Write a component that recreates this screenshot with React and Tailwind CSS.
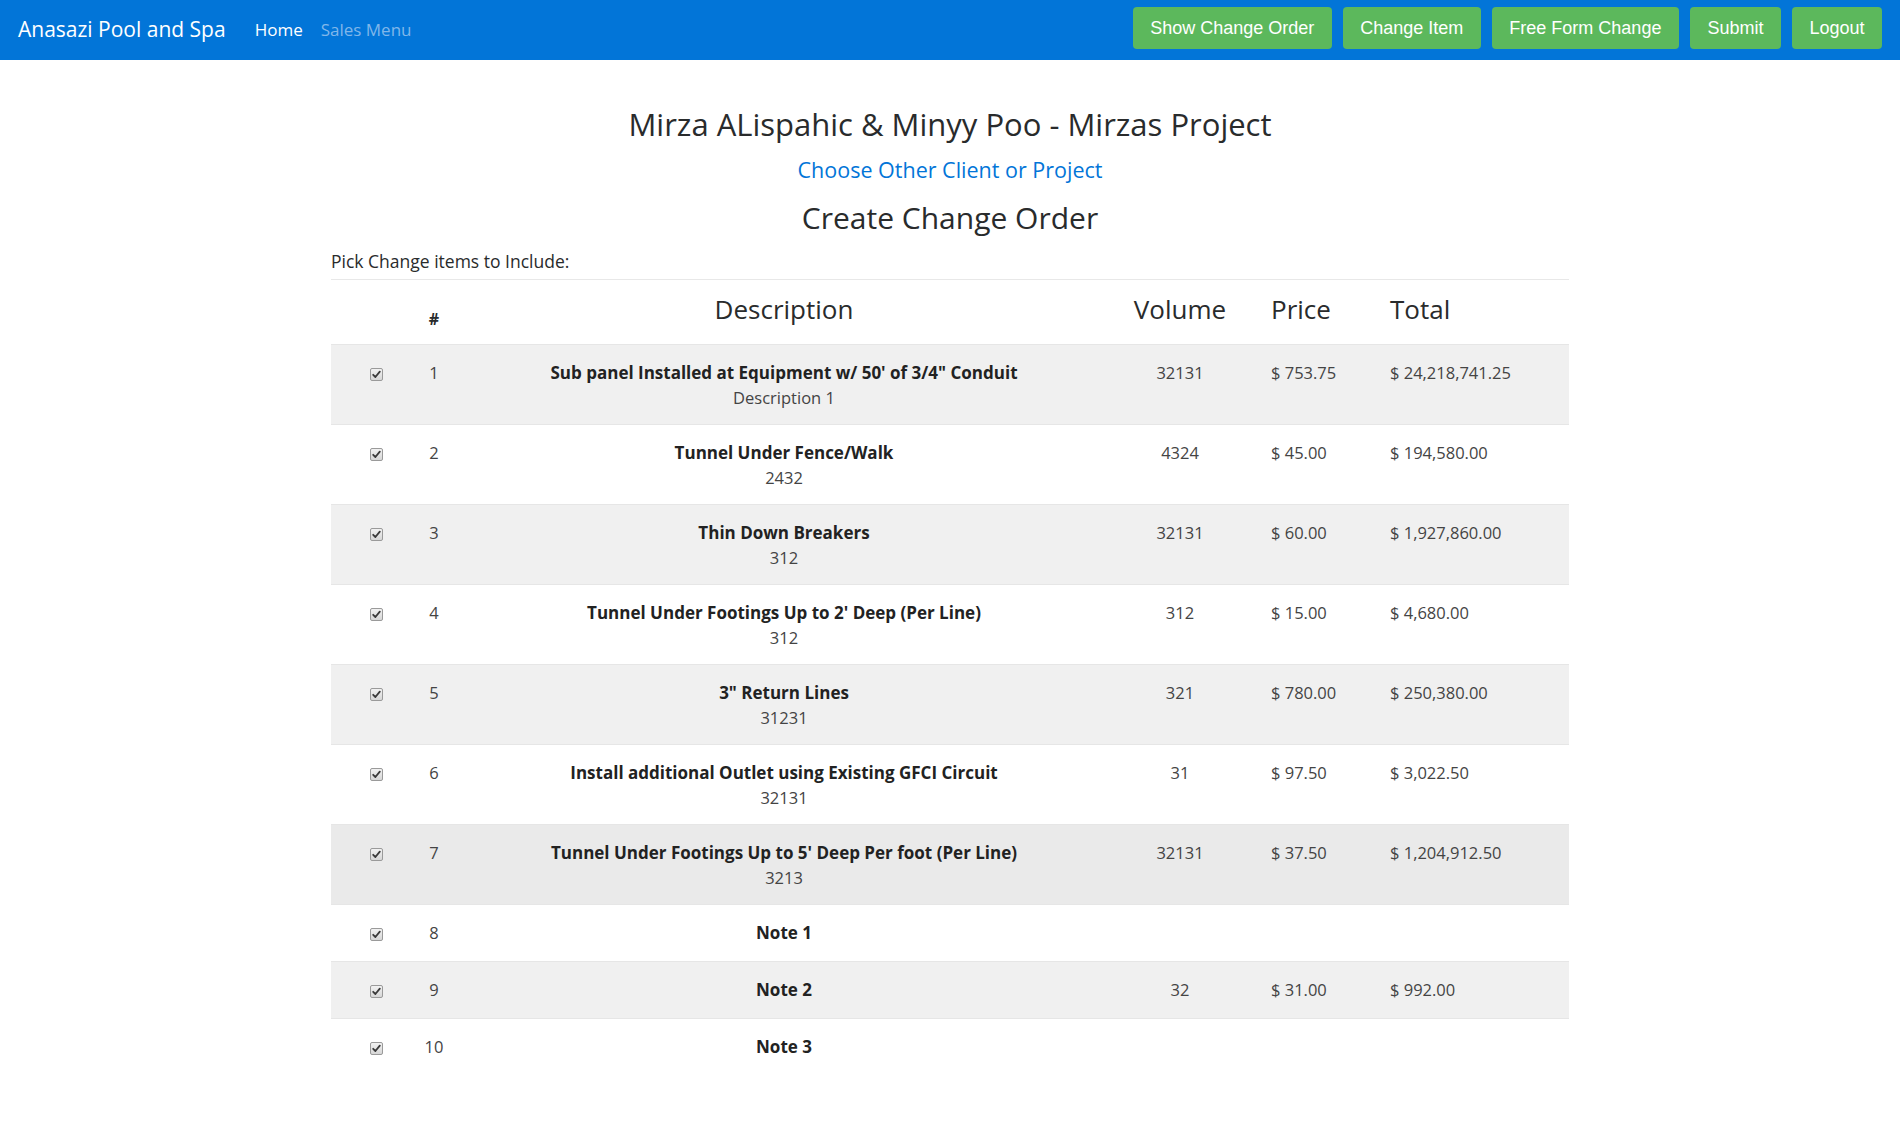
import React from "react";

const rows = [
  { n: 1, t: `Sub panel Installed at Equipment w/ 50' of 3/4" Conduit`, d: "Description 1", v: "32131", p: "$ 753.75", tot: "$ 24,218,741.25" },
  { n: 2, t: "Tunnel Under Fence/Walk", d: "2432", v: "4324", p: "$ 45.00", tot: "$ 194,580.00" },
  { n: 3, t: "Thin Down Breakers", d: "312", v: "32131", p: "$ 60.00", tot: "$ 1,927,860.00" },
  { n: 4, t: "Tunnel Under Footings Up to 2' Deep (Per Line)", d: "312", v: "312", p: "$ 15.00", tot: "$ 4,680.00" },
  { n: 5, t: `3" Return Lines`, d: "31231", v: "321", p: "$ 780.00", tot: "$ 250,380.00" },
  { n: 6, t: "Install additional Outlet using Existing GFCI Circuit", d: "32131", v: "31", p: "$ 97.50", tot: "$ 3,022.50" },
  { n: 7, t: "Tunnel Under Footings Up to 5' Deep Per foot (Per Line)", d: "3213", v: "32131", p: "$ 37.50", tot: "$ 1,204,912.50", hover: true },
  { n: 8, t: "Note 1", d: null, v: "", p: "", tot: "" },
  { n: 9, t: "Note 2", d: null, v: "32", p: "$ 31.00", tot: "$ 992.00" },
  { n: 10, t: "Note 3", d: null, v: "", p: "", tot: "" },
];

function Check() {
  return (
    <span className="inline-flex w-[13px] h-[13px] items-center justify-center rounded-[2px] border border-[#9a9a9a] bg-gradient-to-b from-[#f2f2f2] to-[#d6d6d6] align-middle">
      <svg width="9" height="9" viewBox="0 0 9 9">
        <path d="M1.2 4.8 L3.4 7 L7.8 1.6" fill="none" stroke="#3a3a3a" strokeWidth="1.8" strokeLinecap="round" strokeLinejoin="round" />
      </svg>
    </span>
  );
}

export default function App() {
  const btn = "h-[42px] px-[17.5px] rounded-[4px] bg-[#5cb85c] text-white text-[18px] font-['Liberation_Sans',Arial,sans-serif] flex items-center";
  return (
    <div className="min-h-[1124px] bg-white text-[#333] font-['Open_Sans','Noto_Sans',sans-serif]">
      <nav className="h-[60px] bg-[#0275d8] flex items-center pl-[18px] pr-[18px]">
        <div className="flex items-center mb-[2px]">
          <div className="text-white text-[21px] leading-none mr-[29px]">Anasazi Pool and Spa</div>
          <div className="text-white text-[17px] leading-none mr-[18px]">Home</div>
          <div className="text-[#80b7ea] text-[17px] leading-none">Sales Menu</div>
        </div>
        <div className="ml-auto flex gap-[11px] items-center self-start mt-[7px]">
          <div className={btn}>Show Change Order</div>
          <div className={btn}>Change Item</div>
          <div className={btn}>Free Form Change</div>
          <div className={btn}>Submit</div>
          <div className={btn}>Logout</div>
        </div>
      </nav>

      <div className="w-[1238px] mx-auto">
        <h2 className="mt-[47px] text-center text-[31px] leading-[34px] text-[#292b2c]">Mirza ALispahic &amp; Minyy Poo - Mirzas Project</h2>
        <div className="mt-[15px] text-center text-[21.5px] leading-[28px] text-[#0275d8]">Choose Other Client or Project</div>
        <h2 className="mt-[17px] text-center text-[30px] leading-[34px] text-[#292b2c]">Create Change Order</h2>
        <div className="mt-[15px] text-[17.5px] leading-[23px] text-[#292b2c]">Pick Change items to Include:</div>
        <div className="mt-[6px] border-t border-[#e8e8e8]"></div>

        <table className="w-[1238px] table-fixed border-collapse">
          <thead>
            <tr className="h-[64px]">
              <th className="w-[90px]"></th>
              <th className="w-[26px] align-top pt-[29px] text-[16px] leading-[20px] font-bold text-[#292b2c]">#</th>
              <th className="w-[674px] align-top pt-[13px] text-[26px] leading-[32px] font-normal text-[#292b2c]">Description</th>
              <th className="w-[118px] align-top pt-[13px] text-[26px] leading-[32px] font-normal text-[#292b2c]">Volume</th>
              <th className="w-[119px] align-top pt-[13px] pl-[32px] text-left text-[26px] leading-[32px] font-normal text-[#292b2c]">Price</th>
              <th className="w-[211px] align-top pt-[13px] pl-[32px] text-left text-[26px] leading-[32px] font-normal text-[#292b2c]">Total</th>
            </tr>
          </thead>
          <tbody>
            {rows.map((r) => {
              const bg = r.hover ? "bg-[#eaeaea]" : r.n % 2 === 1 ? "bg-[#f0f0f0]" : "bg-white";
              const cell = "align-top py-[15px] text-[16.5px] leading-[26px]";
              return (
                <tr key={r.n} className={`${bg} border-t border-[#e6e6e6]`}>
                  <td className={`${cell} text-center`}><Check /></td>
                  <td className={`${cell} text-center text-[#444]`}>{r.n}</td>
                  <td className={`${cell} text-center`}>
                    <div className="font-bold text-[17px] text-[#222]">{r.t}</div>
                    {r.d && <div className="text-[#444] leading-[23px]">{r.d}</div>}
                  </td>
                  <td className={`${cell} text-center text-[#444]`}>{r.v}</td>
                  <td className={`${cell} pl-[32px] text-left text-[#444]`}>{r.p}</td>
                  <td className={`${cell} pl-[32px] text-left text-[#444]`}>{r.tot}</td>
                </tr>
              );
            })}
          </tbody>
        </table>
      </div>
    </div>
  );
}
